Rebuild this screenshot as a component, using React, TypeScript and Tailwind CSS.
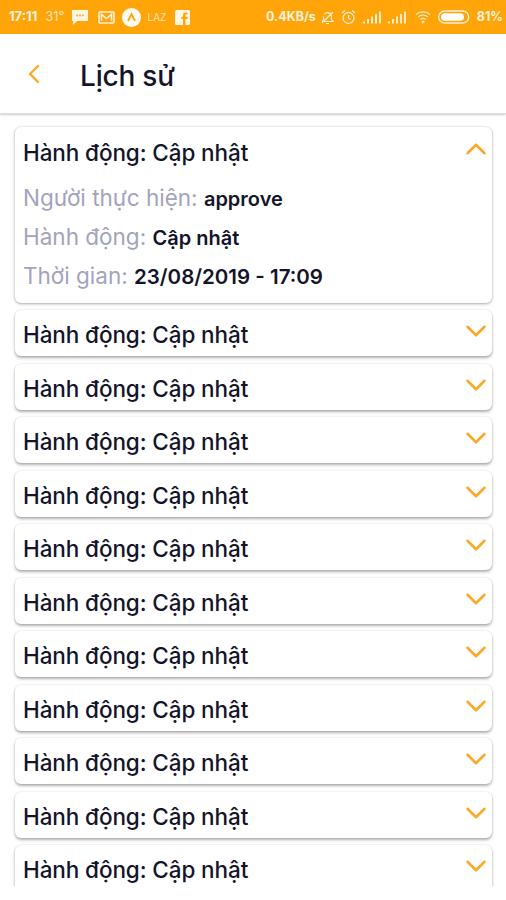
import React from "react"
import { ChevronLeft, ChevronDown, ChevronUp } from "lucide-react"

const FONT = "font-['Inter','Liberation_Sans',sans-serif]"
const COLLAPSED_ROWS = 11

const StatusIcons = () => (
  <div className="flex h-[34px] shrink-0 items-center justify-between bg-[#ffa509] pl-[9px] pr-[3px] text-white">
    <div className="flex items-center">
      <span className="text-[13px] font-bold text-white/90">17:11</span>
      <span className="ml-[8px] text-[13px] text-white/70">31°</span>
      {/* chat bubble */}
      <svg className="ml-[6px]" width="18" height="18" viewBox="0 0 18 18" fill="white" opacity="0.9">
        <path d="M1 2h16v11H6l-4 4v-4H1z" />
        <circle cx="6" cy="7.5" r="1" fill="#ffa509" />
        <circle cx="9" cy="7.5" r="1" fill="#ffa509" />
        <circle cx="12" cy="7.5" r="1" fill="#ffa509" />
      </svg>
      {/* mail */}
      <svg className="ml-[9px]" width="17" height="13" viewBox="0 0 17 13" fill="none" stroke="white" strokeWidth="1.6" opacity="0.85">
        <rect x="1" y="1" width="15" height="11" rx="1" />
        <path d="M3.5 10V3.5l5 4 5-4V10" />
      </svg>
      {/* round app icon */}
      <svg className="ml-[7px]" width="19" height="19" viewBox="0 0 19 19">
        <circle cx="9.5" cy="9.5" r="9.5" fill="white" opacity="0.95" />
        <path d="M6 13l3.5-7 3.5 7" fill="none" stroke="#ffa509" strokeWidth="1.8" />
      </svg>
      <span className="ml-[7px] text-[10px] text-white/70">LAZ</span>
      {/* facebook */}
      <svg className="ml-[9px]" width="15" height="15" viewBox="0 0 15 15">
        <rect width="15" height="15" rx="1.5" fill="white" opacity="0.9" />
        <path d="M10.5 15V9h2V6.8h-2V5.6c0-.7.3-1 1-1h1V2.600h-1.600C8.900 2.600 8 3.700 8 5.300v1.500H6.500V9H8v6z" fill="#ffa509" />
      </svg>
    </div>
    <div className="flex items-center">
      <span className="text-[12.5px] font-bold text-white/85">0.4KB/s</span>
      {/* muted bell */}
      <svg className="ml-[4px]" width="15" height="15" viewBox="0 0 15 15" fill="none" stroke="white" strokeWidth="1.2" opacity="0.8">
        <path d="M2 11.500h11l-1.500-2V6.500a4 4 0 0 0-7-2.500M3.500 6.500v3L2 11.500M6 13.500h3M2 13l11-11" />
      </svg>
      {/* alarm */}
      <svg className="ml-[6px]" width="15" height="16" viewBox="0 0 15 16" fill="none" stroke="white" strokeWidth="1.3" opacity="0.8">
        <circle cx="7.500" cy="9" r="5.500" />
        <path d="M7.500 6v3l2 1.500M1 4l3-2.500M14 4l-3-2.500" />
      </svg>
      {/* signal */}
      <svg className="ml-[7px]" width="18" height="13" viewBox="0 0 18 13" fill="white" opacity="0.8">
        <rect x="0" y="10.500" width="2" height="2" />
        <rect x="4" y="8" width="2" height="4.500" />
        <rect x="8" y="5.500" width="2" height="7" />
        <rect x="12" y="3" width="2" height="9.500" />
        <rect x="16" y="0.500" width="2" height="12" />
      </svg>
      <svg className="ml-[7px]" width="18" height="13" viewBox="0 0 18 13" fill="white" opacity="0.8">
        <rect x="0" y="10.500" width="2" height="2" />
        <rect x="4" y="8" width="2" height="4.500" />
        <rect x="8" y="5.500" width="2" height="7" />
        <rect x="12" y="3" width="2" height="9.500" />
        <rect x="16" y="0.500" width="2" height="12" />
      </svg>
      {/* wifi */}
      <svg className="ml-[9px]" width="16" height="14" viewBox="0 0 16 14" fill="none" stroke="white" strokeWidth="1.300" opacity="0.8">
        <path d="M1 4.500c4-3.500 10-3.500 14 0M3.200 7c2.800-2.400 6.800-2.400 9.600 0M5.400 9.500c1.500-1.300 3.700-1.300 5.200 0" />
        <circle cx="8" cy="12" r="0.800" fill="white" />
      </svg>
      {/* battery */}
      <svg className="ml-[7px]" width="32" height="14" viewBox="0 0 32 14">
        <rect x="0.700" y="1" width="30" height="12" rx="6" fill="none" stroke="white" strokeWidth="1.300" opacity="0.85" />
        <rect x="3" y="3.200" width="23" height="7.600" rx="3.800" fill="white" />
      </svg>
      <span className="ml-[7px] text-[12.5px] font-bold text-white/85">81%</span>
    </div>
  </div>
)

const Row = () => (
  <div className="mb-[7.5px] flex h-[46px] items-start justify-between rounded-[6px] bg-white pl-[8px] shadow-[0_2px_3px_rgba(0,0,0,0.3),0_0_2px_rgba(0,0,0,0.15)]">
    <span className="mt-[10px] text-[22.5px] leading-[30px] font-medium tracking-[-0.1px] text-[#14142b]">Hành động: Cập nhật</span>
    <ChevronDown className="mr-[-1px] mt-[4px] text-[#ffa726]" size={34} strokeWidth={1.8} />
  </div>
)

const App = () => {
  return (
    <div className={`flex h-[900px] w-full flex-col bg-white ${FONT}`}>
      <div className="flex h-[886px] flex-col overflow-hidden">
        <StatusIcons />

        {/* header */}
        <div className="flex h-[80px] shrink-0 items-center border-b border-[#dddddd] pt-[5px] shadow-[0_1px_2px_rgba(0,0,0,0.2)]">
          <ChevronLeft className="mb-[5px] ml-[18px] text-[#ffa726]" size={32} strokeWidth={1.8} />
          <h1 className="ml-[30px] text-[28px] font-medium tracking-[-0.2px] text-[#14142b]">Lịch sử</h1>
        </div>

        <div className="px-[15px] pr-[14px] pt-[13px]">
          {/* expanded item */}
          <div className="mb-[7px] h-[176px] rounded-[6px] bg-white pl-[8px] shadow-[0_1px_3px_rgba(0,0,0,0.3),0_0_2px_rgba(0,0,0,0.15)]">
            <div className="flex items-start justify-between">
              <span className="mt-[11px] text-[22.5px] leading-[30px] font-medium tracking-[-0.1px] text-[#14142b]">Hành động: Cập nhật</span>
              <ChevronUp className="mr-[-1px] mt-[5px] text-[#ffa726]" size={34} strokeWidth={1.8} />
            </div>
            <div className="mt-[15px] flex flex-col gap-[8px] text-[22.5px] leading-[30px] text-[#a3a3bd]">
              <div>Người thực hiện: <span className="text-[20px] font-semibold text-[#14142b]">approve</span></div>
              <div>Hành động: <span className="text-[20px] font-semibold text-[#14142b]">Cập nhật</span></div>
              <div>Thời gian: <span className="text-[20.5px] font-semibold text-[#14142b]">23/08/2019 - 17:09</span></div>
            </div>
          </div>

          {Array.from({ length: COLLAPSED_ROWS }).map((_, i) => (
            <Row key={i} />
          ))}
        </div>
      </div>
    </div>
  )
}

export default App
